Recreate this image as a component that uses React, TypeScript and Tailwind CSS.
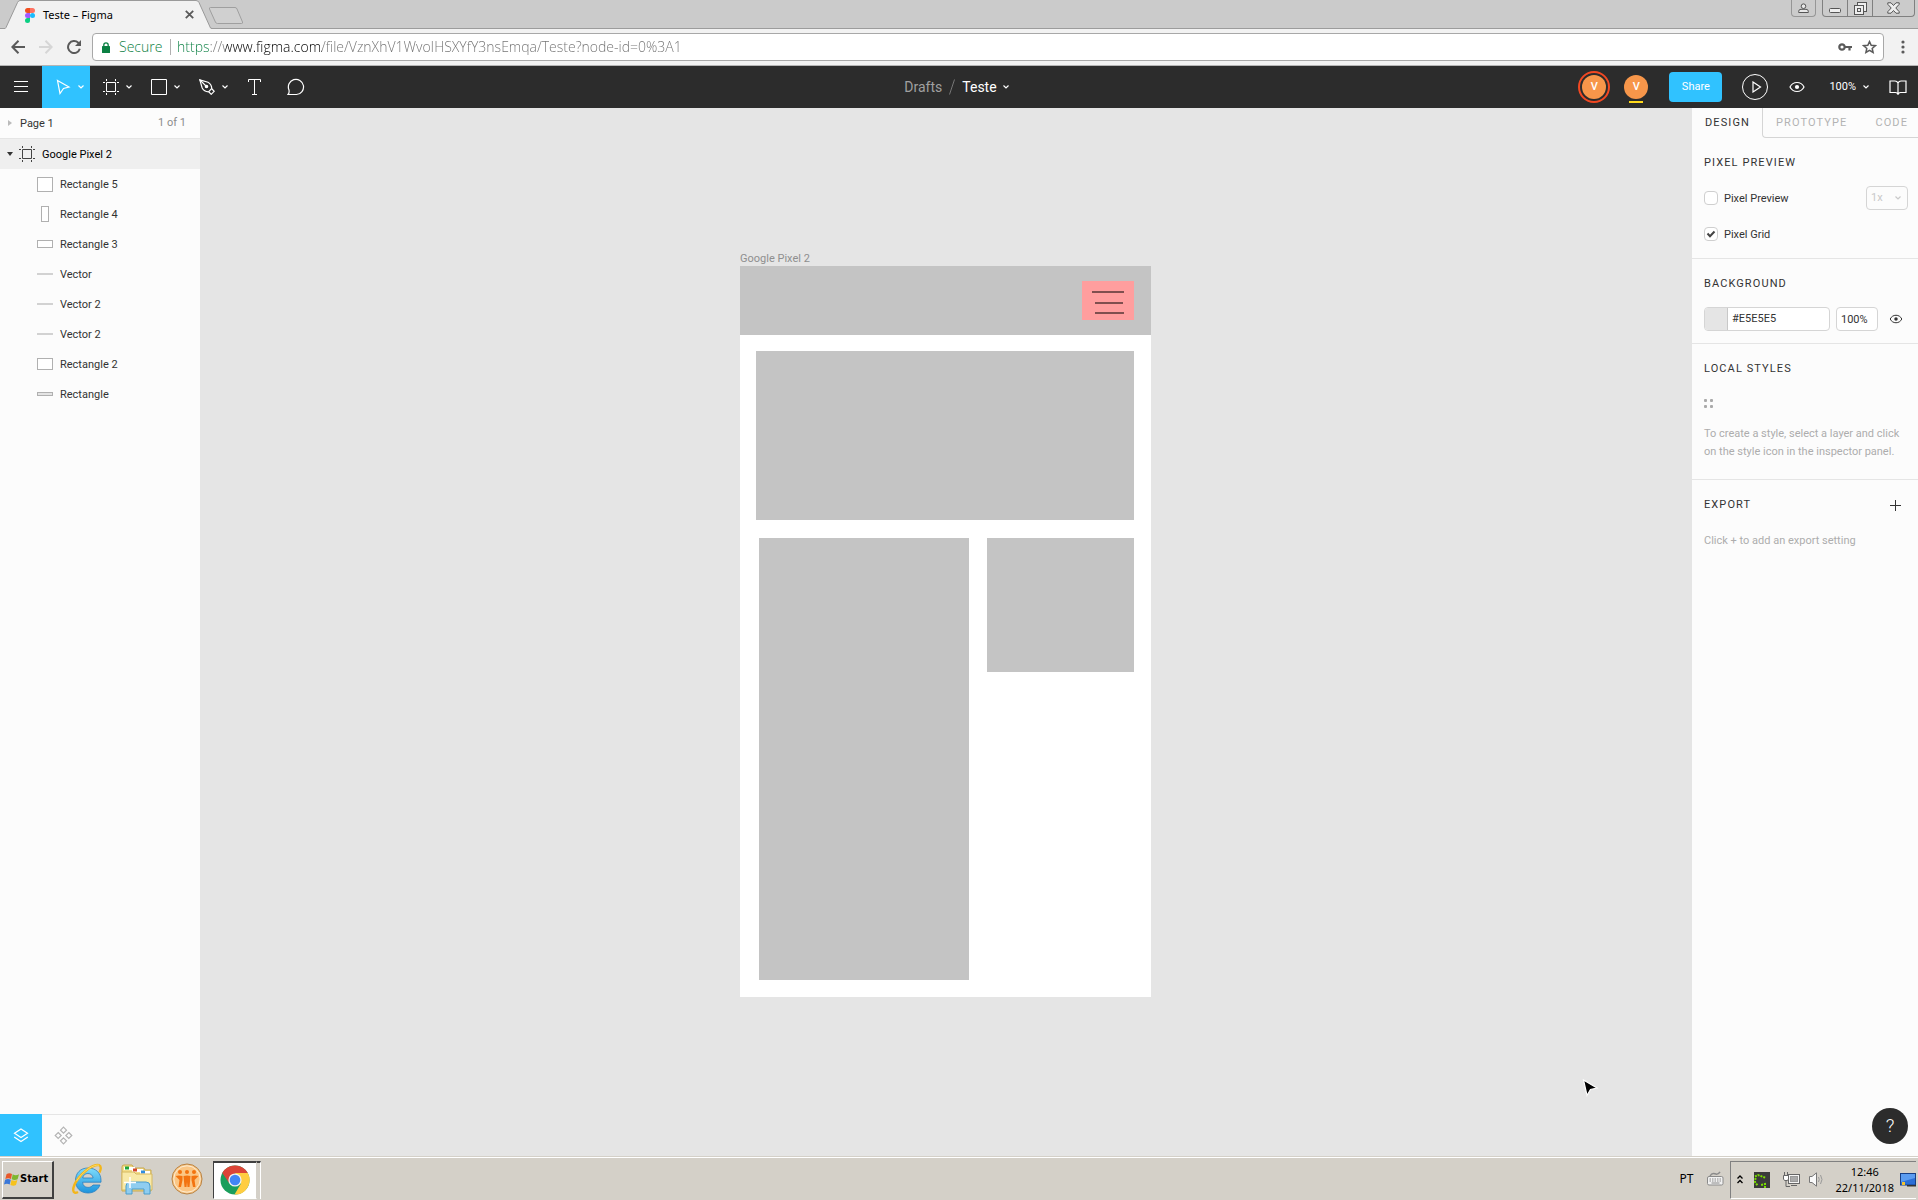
import React from "react";

type Kids = { children?: React.ReactNode };

const layers: { name: string; box: [number, number] | null; fill?: string }[] = [
  { name: "Rectangle 5", box: [15, 14] },
  { name: "Rectangle 4", box: [7, 15] },
  { name: "Rectangle 3", box: [15, 7] },
  { name: "Vector", box: null },
  { name: "Vector 2", box: null },
  { name: "Vector 2", box: null },
  { name: "Rectangle 2", box: [15, 11] },
  { name: "Rectangle", box: [15, 3], fill: "#e4e4e4" },
];

function Chevron({ className = "" }: { className?: string }) {
  return (
    <svg width="8" height="6" viewBox="0 0 8 6" className={className} fill="none" stroke="currentColor" strokeWidth="1.2">
      <path d="M1.500 1.500 4 4 6.500 1.500" />
    </svg>
  );
}

function FrameIcon() {
  return (
    <svg width="16" height="16" viewBox="0 0 16 16" fill="none" stroke="currentColor">
      <path d="M3.5 3.5h9v9h-9zM3.5 0v2M12.500 0v2M3.500 14v2M12.500 14v2M0 3.500h2M0 12.500h2M14 3.500h2M14 12.500h2" />
    </svg>
  );
}

function EyeIcon({ small = false }: { small?: boolean }) {
  return (
    <svg width={small ? 14 : 16} height={small ? 10 : 12} viewBox="0 0 16 12" fill="none" stroke="currentColor" strokeWidth="1.2">
      <path d="M1 6C2.500 3 5 1.500 8 1.500S13.500 3 15 6c-1.500 3-4 4.500-7 4.500S2.500 9 1 6z" />
      <circle cx="8" cy="6" r="2.100" fill="currentColor" stroke="none" />
    </svg>
  );
}

function BrowserTabs() {
  return (
    <header className="relative flex h-[29px] shrink-0 items-start border-b border-[#9c9c9c] bg-[#cbcbcb]">
      <div className="relative ml-[5px] flex h-[29px] w-[207px] items-center pl-5 pr-[18px]">
        <svg className="absolute inset-0" width="207" height="29" viewBox="0 0 207 29">
          <path d="M0 29 1 27.500 12.500 2.500Q13.500 .5 15 .5H191Q193 .5 194 2.500L205.500 28 207 29z" fill="#f2f2f2" />
          <path d="M0 28.500 1 27.500 12.500 2.500Q13.500 .5 15 .5H191Q193 .5 194 2.500L205.500 28 207 28.500" fill="none" stroke="#9a9a9a" />
        </svg>
        <svg className="relative mt-0.5" width="10" height="15" viewBox="0 0 10 15">
          <path d="M5 0H2.500a2.500 2.500 0 0 0 0 5H5z" fill="#f24e1e" />
          <path d="M5 0h2.500a2.500 2.500 0 0 1 0 5H5z" fill="#ff7262" />
          <path d="M5 5H2.500a2.500 2.500 0 0 0 0 5H5z" fill="#a259ff" />
          <circle cx="7.500" cy="7.500" r="2.500" fill="#1abcfe" />
          <path d="M5 10H2.500A2.500 2.500 0 1 0 5 12.500z" fill="#0acf83" />
        </svg>
        <span className="relative ml-2 flex-1 font-['Noto_Sans'] text-[11px] leading-4 text-black">Teste – Figma</span>
        <button aria-label="Close tab" className="relative text-[#5a5a5a]">
          <svg width="9" height="9" viewBox="0 0 9 9" stroke="currentColor" strokeWidth="1.800">
            <path d="M.8.800 8.200 8.200M8.200.800.800 8.200" />
          </svg>
        </button>
      </div>
      <button aria-label="New tab" className="-ml-1 mt-1.5">
        <svg width="36" height="19" viewBox="0 0 36 19">
          <path d="M2.500 1.500H27Q28.500 1.500 29 3L34.500 16Q35 17.500 33.500 17.500H9.500Q8 17.500 7.400 16L1.500 3Q1 1.500 2.500 1.500z" fill="#d0d0d0" stroke="#9f9f9f" />
        </svg>
      </button>
      <div className="ml-auto mr-[3px] flex gap-1.5">
        <button aria-label="User" className="flex h-[17px] w-[25px] items-center justify-center rounded-b border border-t-0 border-[#969696]">
          <svg width="11" height="11" viewBox="0 0 11 11" fill="#e8e8e8" stroke="#555">
            <circle cx="5.500" cy="3.200" r="2.300" />
            <path d="M.7 9.500V8.300Q.7 6.300 3 6.300H8q2.300 0 2.300 2V9.500z" />
          </svg>
        </button>
        <div className="flex h-[17px] rounded-b border border-t-0 border-[#808080] text-[#555]">
          <button aria-label="Minimize" className="flex w-[25px] items-center justify-center border-r border-[#808080]">
            <svg width="12" height="12" viewBox="0 0 12 12" fill="#eee" stroke="currentColor">
              <rect x=".5" y="6.500" width="11" height="4" rx="1" />
            </svg>
          </button>
          <button aria-label="Restore" className="flex w-[25px] items-center justify-center border-r border-[#808080]">
            <svg width="13" height="13" viewBox="0 0 13 13" fill="#eee" stroke="currentColor">
              <rect x="3.500" y=".5" width="9" height="9" />
              <rect x=".5" y="3.500" width="9" height="9" />
              <rect x="3.500" y="6.500" width="3" height="3" />
            </svg>
          </button>
          <button aria-label="Close" className="flex w-[41px] items-center justify-center">
            <svg width="13" height="12" viewBox="0 0 13 12" fill="#eee" stroke="currentColor">
              <path d="M.8.800H4L6.500 3.500 9 .8h3.200v1.500L8.800 6l3.400 3.700v1.500H9L6.500 8.500 4 11.200H.8V9.700L4.200 6 .8 2.300z" />
            </svg>
          </button>
        </div>
      </div>
    </header>
  );
}

function AddressBar() {
  return (
    <div className="flex h-[37px] shrink-0 items-center border-b border-[#b5b5b5] bg-[#f2f2f2] pl-[11px] pr-2 text-[#5a5a5a]">
      <button aria-label="Back">
        <svg width="14" height="14" viewBox="0 0 14 14" fill="none" stroke="currentColor" strokeWidth="2">
          <path d="M14 7H1.500M7.500.800 1.400 7l6.100 6.200" />
        </svg>
      </button>
      <button aria-label="Forward" className="ml-3.5 text-[#d6d6d6]">
        <svg width="14" height="14" viewBox="0 0 14 14" fill="none" stroke="currentColor" strokeWidth="2">
          <path d="M0 7h12.500M6.500.800 12.600 7l-6.100 6.200" />
        </svg>
      </button>
      <button aria-label="Reload" className="ml-3.5">
        <svg width="14" height="14" viewBox="0 0 14 14" fill="none" stroke="currentColor" strokeWidth="2">
          <path d="M12.800 8.800A6 6 0 1 1 11.300 2.800L12 3.500" />
          <path d="M14 0v6H8z" fill="currentColor" stroke="none" />
        </svg>
      </button>
      <div className="ml-[11px] flex h-7 flex-1 items-center rounded-sm border border-[#a8a8a8] bg-white pl-[9px] pr-1.5 font-['Open_Sans'] text-[14px] font-light leading-6">
        <svg width="8" height="11" viewBox="0 0 8 11" className="shrink-0">
          <path d="M1.800 5V3a2.200 2.200 0 0 1 4.400 0v2" fill="none" stroke="#0b8043" strokeWidth="1.300" />
          <rect y="4" width="8" height="7" rx=".5" fill="#0b8043" />
        </svg>
        <span className="ml-[9px] w-[42px] text-[#0b8043]">Secure</span>
        <span className="ml-[9px] mr-1.5 h-4 w-px bg-[#b0b0b0]" />
        <input
          aria-label="Address"
          defaultValue="https://www.figma.com/file/VznXhV1WvoIHSXYfY3nsEmqa/Teste?node-id=0%3A1"
          className="h-6 min-w-0 flex-1 bg-[linear-gradient(90deg,#0b8043_33px,#707070_33px,#707070_48px,#000_48px,#000_145px,#707070_145px)] bg-clip-text text-transparent outline-none"
        />
        <button aria-label="Saved password">
          <svg width="14" height="8" viewBox="0 0 14 8" fill="none" stroke="currentColor" strokeWidth="2.200">
            <circle cx="4" cy="4" r="2.700" />
            <path d="M6.500 4H14M11.500 4v3.500" />
          </svg>
        </button>
        <button aria-label="Bookmark" className="ml-2.5">
          <svg width="15" height="14" viewBox="0 0 15 14" fill="none" stroke="currentColor" strokeWidth="1.500">
            <path d="M7.500 1.600 9.200 5.300l4.100.4-3.100 2.700.9 4.100-3.600-2.100-3.600 2.100.9-4.100L1.700 5.700l4.100-.4z" />
          </svg>
        </button>
      </div>
      <button aria-label="Menu" className="ml-3.5 w-3">
        <svg width="12" height="14" viewBox="0 0 12 14" fill="currentColor">
          <circle cx="5" cy="2" r="1.600" />
          <circle cx="5" cy="7" r="1.600" />
          <circle cx="5" cy="12" r="1.600" />
        </svg>
      </button>
    </div>
  );
}

function Tool({ label, active, children }: Kids & { label: string; active?: boolean }) {
  return (
    <button
      aria-label={label}
      className={
        active
          ? "flex h-full w-12 items-center justify-between bg-[#30c2ff] pl-3.5 pr-[5px]"
          : "flex h-full w-12 items-center justify-between pl-[13px] pr-[5px]"
      }
    >
      {children}
      <Chevron />
    </button>
  );
}

function AppBar() {
  return (
    <div className="grid h-[42px] shrink-0 grid-cols-[1fr_auto_1fr] items-center bg-[#2c2c2c] font-['Roboto'] text-white">
      <div className="flex h-full items-center">
        <button aria-label="Main menu" className="flex w-[42px] justify-center">
          <svg width="14" height="12" viewBox="0 0 14 12" stroke="currentColor">
            <path d="M0 .5h14M0 5.500h14M0 10.500h14" />
          </svg>
        </button>
        <Tool label="Move" active>
          <svg width="15" height="16" viewBox="0 0 15 16" fill="none" stroke="currentColor" strokeWidth="1.200">
            <path d="M1.500 1.500 13 8 7.500 9.500 4 14.500z" />
          </svg>
        </Tool>
        <Tool label="Frame">
          <FrameIcon />
        </Tool>
        <Tool label="Rectangle">
          <svg width="16" height="16" viewBox="0 0 16 16" fill="none" stroke="currentColor">
            <path d="M.5.500h15v15H.5z" />
          </svg>
        </Tool>
        <Tool label="Pen">
          <svg width="16" height="16" viewBox="0 0 16 16" fill="none" stroke="currentColor" strokeWidth="1.200">
            <path d="M.8.800 9 3.200Q12.500 5 12.800 9.500L9.500 12.800Q5 12.500 3.200 9z" />
            <path d="M.8.800 7 7M13 10l2.200 2.300-3 3L10 13" />
            <circle cx="7.500" cy="7.500" r="1.200" fill="currentColor" />
          </svg>
        </Tool>
        <button aria-label="Text" className="flex w-[41px] justify-center">
          <svg width="13" height="16" viewBox="0 0 13 16" fill="none" stroke="currentColor">
            <path d="M.5 3V.5h12V3M6.500.500v15M4 15.500h5" />
          </svg>
        </button>
        <button aria-label="Comment" className="flex w-[42px] justify-center">
          <svg width="18" height="18" viewBox="0 0 18 18" fill="none" stroke="currentColor" strokeWidth="1.200">
            <path d="M1 16.500Q2.500 15 2 12A7.600 7.600 0 1 1 9.500 16.500z" />
          </svg>
        </button>
      </div>
      <div className="flex items-center pr-1 text-[14px] leading-5">
        <a href="#drafts" className="text-[#a0a0a0]">Drafts</a>
        <svg width="6" height="16" viewBox="0 0 6 16" className="mx-[7px]" stroke="#777">
          <path d="M5.500.500.500 15.500" />
        </svg>
        <button className="flex items-center gap-[5px]">
          Teste <Chevron />
        </button>
      </div>
      <div className="flex h-full items-center justify-end pr-[11px] text-[11px]">
        <div className="flex size-8 items-center justify-center rounded-full border-2 border-[#f24822]">
          <span className="flex size-6 items-center justify-center rounded-full bg-[#f7964a] font-medium">V</span>
        </div>
        <div className="relative ml-3.5 flex size-6 items-center justify-center rounded-full bg-[#f7964a] font-medium">
          V
          <span className="absolute -bottom-1 left-[5px] h-0.5 w-3.5 bg-[#ffd91a]" />
        </div>
        <button className="ml-[21px] h-[30px] w-[53px] rounded-sm bg-[#30c2ff] text-[11px]">Share</button>
        <button aria-label="Present" className="ml-5 flex size-[26px] items-center justify-center rounded-full border border-white pl-1">
          <svg width="10" height="12" viewBox="0 0 10 12" fill="none" stroke="currentColor" strokeWidth="1.200">
            <path d="M1 1v10l7.500-5z" />
          </svg>
        </button>
        <button aria-label="View" className="ml-[21px]">
          <EyeIcon />
        </button>
        <button className="ml-6 flex items-center gap-1.5">
          100% <Chevron />
        </button>
        <button aria-label="Library" className="ml-[19px]">
          <svg width="18" height="15" viewBox="0 0 18 15" fill="none" stroke="currentColor" strokeWidth="1.200">
            <path d="M9 3Q8 1 6 1H1v11.500H6.500Q8.500 12.500 9 14.500 9.500 12.500 11.500 12.500H17V1H12Q10 1 9 3zV14" />
          </svg>
        </button>
      </div>
    </div>
  );
}

function LayersPanel() {
  return (
    <aside className="flex w-[200px] shrink-0 flex-col bg-[#fcfcfc] text-[#333]">
      <div className="flex h-[31px] items-center border-b border-[#e5e5e5] pl-2 pr-3.5">
        <svg width="4" height="6" viewBox="0 0 4 6" fill="#bbb">
          <path d="M0 0 4 3 0 6z" />
        </svg>
        <button className="ml-2 flex-1 pt-0.5 text-left">Page 1</button>
        <span className="text-[#8c8c8c]">1 of 1</span>
      </div>
      <div className="flex h-[30px] items-center bg-[#efefef] pl-[7px] text-black">
        <svg width="6" height="4" viewBox="0 0 6 4" fill="#333">
          <path d="M0 0h6L3 4z" />
        </svg>
        <span className="ml-1.5 text-[#444]">
          <FrameIcon />
        </span>
        <button className="ml-[7px] pt-0.5">Google Pixel 2</button>
      </div>
      <ul>
        {layers.map((l, i) => (
          <li key={i} className="flex h-[30px] items-center pl-[37px]">
            <svg width="16" height="16" viewBox="0 0 16 16">
              {l.box ? (
                <rect
                  x={l.box[0] === 7 ? 4.5 : 0.5}
                  y={Math.floor((16 - l.box[1]) / 2) + 0.5}
                  width={l.box[0]}
                  height={l.box[1]}
                  fill={l.fill ?? "#fff"}
                  stroke="#b0b0b0"
                />
              ) : (
                <rect y="7" width="16" height="2" fill="#d2d2d2" />
              )}
            </svg>
            <button className="ml-[7px] pt-0.5">{l.name}</button>
          </li>
        ))}
      </ul>
      <div className="mt-auto flex h-[42px] items-stretch">
        <button aria-label="Layers" className="flex w-[42px] items-center justify-center bg-[#30c2ff] text-white">
          <svg width="16" height="15" viewBox="0 0 16 15" fill="none" stroke="currentColor" strokeWidth="1.200">
            <path d="M8 1l6.500 4.300L8 9.600 1.500 5.300zM1.200 9 8 13.600 14.800 9" />
          </svg>
        </button>
        <div className="flex flex-1 items-center border-t border-[#e5e5e5] pl-3">
          <button aria-label="Components" className="text-[#b3b3b3]">
            <svg width="19" height="19" viewBox="0 0 19 19" fill="none" stroke="currentColor" strokeWidth="1.200">
              <path d="M9.500 1.200l3 3-3 3-3-3zM9.500 11.800l3 3-3 3-3-3zM4.200 6.500l3 3-3 3-3-3zM14.800 6.500l3 3-3 3-3-3z" />
            </svg>
          </button>
        </div>
      </div>
    </aside>
  );
}

function Canvas() {
  return (
    <main className="relative min-w-0 flex-1 overflow-hidden bg-[#e5e5e5]">
      <span className="absolute left-[540px] top-[143px] leading-4 text-[#8f8f8f]">Google Pixel 2</span>
      <div className="absolute left-[540px] top-[158px] h-[731px] w-[411px] bg-white">
        <div className="absolute left-0 top-0 h-[69px] w-[411px] bg-[#c4c4c4]" />
        <div className="absolute left-[342px] top-[15px] h-[39px] w-[52px] bg-[#ff9e9e]" />
        <div className="absolute left-[352px] top-[25px] h-0.5 w-8 bg-[#804f4f]" />
        <div className="absolute left-[355px] top-[36px] h-0.5 w-7 bg-[#804f4f]" />
        <div className="absolute left-[355px] top-[46px] h-0.5 w-[29px] bg-[#804f4f]" />
        <div className="absolute left-4 top-[85px] h-[169px] w-[378px] bg-[#c4c4c4]" />
        <div className="absolute left-[19px] top-[272px] h-[442px] w-[210px] bg-[#c4c4c4]" />
        <div className="absolute left-[247px] top-[272px] h-[134px] w-[147px] bg-[#c4c4c4]" />
      </div>
      <svg className="absolute left-[1382px] top-[971px]" width="18" height="19" viewBox="0 0 18 19">
        <path d="M1.500 1 15 9 8.500 10.500 5 16.500z" fill="#000" stroke="#fff" strokeWidth="1.200" />
      </svg>
    </main>
  );
}

function SectionTitle({ children }: Kids) {
  return <h2 className="text-[11px] leading-4 tracking-widest">{children}</h2>;
}

function Check({ label, checked }: { label: string; checked: boolean }) {
  return (
    <label className="flex items-center gap-1.5">
      <span className="relative flex size-3.5">
        <input type="checkbox" defaultChecked={checked} className="peer size-3.5 appearance-none rounded-sm border border-[#cfcfcf] bg-white" />
        <svg className="pointer-events-none absolute inset-0 hidden peer-checked:block" width="14" height="14" viewBox="0 0 14 14" fill="none" stroke="#444" strokeWidth="2">
          <path d="M3.500 6.500 6 9.200 10.500 4.500" />
        </svg>
      </span>
      <span className="pt-0.5">{label}</span>
    </label>
  );
}

function Inspector() {
  return (
    <aside className="relative flex w-[226px] shrink-0 flex-col bg-[#fcfcfc] text-[#333]">
      <div role="tablist" className="flex h-[30px] text-[11px] tracking-widest">
        <button role="tab" aria-selected="true" className="w-[70px] pl-px">DESIGN</button>
        <div className="flex flex-1 items-center justify-between rounded-bl-sm border-b border-l border-[#d5d5d5] pl-[13px] pr-2.5 pt-px text-[#b3b3b3]">
          <button role="tab" aria-selected="false" className="tracking-widest">PROTOTYPE</button>
          <button role="tab" aria-selected="false" className="tracking-widest">CODE</button>
        </div>
      </div>
      <section className="border-b border-[#e5e5e5] px-3 pb-3 pt-[17px]">
        <SectionTitle>PIXEL PREVIEW</SectionTitle>
        <div className="-mr-0.5 mt-[15px] flex h-6 items-center justify-between">
          <Check label="Pixel Preview" checked={false} />
          <div className="relative text-[#c9c9c9]">
            <select aria-label="Pixel density" disabled defaultValue="1x" className="h-6 w-[42px] appearance-none rounded-sm border border-[#d5d5d5] bg-[#fcfcfc] pl-1">
              <option>1x</option>
            </select>
            <Chevron className="pointer-events-none absolute right-1.5 top-[9px]" />
          </div>
        </div>
        <div className="mt-3 flex h-6 items-center">
          <Check label="Pixel Grid" checked />
        </div>
      </section>
      <section className="border-b border-[#e5e5e5] px-3 pb-3 pt-[17px]">
        <SectionTitle>BACKGROUND</SectionTitle>
        <div className="mt-[15px] flex items-center">
          <div className="flex h-6 w-[126px] overflow-hidden rounded-sm border border-[#d5d5d5] bg-white">
            <button aria-label="Background colour" className="w-[23px] border-r border-[#c8c8c8] bg-[#e5e5e5]" />
            <input aria-label="Hex" defaultValue="#E5E5E5" className="min-w-0 flex-1 pl-1 outline-none" />
          </div>
          <input aria-label="Opacity" defaultValue="100%" className="ml-1.5 h-6 w-[42px] rounded-sm border border-[#d5d5d5] bg-white pl-1 outline-none" />
          <button aria-label="Toggle background" className="ml-[11px]">
            <EyeIcon small />
          </button>
        </div>
      </section>
      <section className="border-b border-[#e5e5e5] pb-[18px] pl-3 pt-[17px]">
        <SectionTitle>LOCAL STYLES</SectionTitle>
        <svg width="10" height="10" viewBox="0 0 10 10" fill="#aaa" className="mt-[22px]">
          <rect width="3" height="3" rx="1" />
          <rect x="6" width="3" height="3" rx="1" />
          <rect y="6" width="3" height="3" rx="1" />
          <rect x="6" y="6" width="3" height="3" rx="1" />
        </svg>
        <p className="mt-4 leading-[18px] text-[#adadad]">
          To create a style, select a layer and click
          <br />
          on the style icon in the inspector panel.
        </p>
      </section>
      <section className="px-3 pt-[17px]">
        <div className="flex items-center justify-between pr-[5px]">
          <SectionTitle>EXPORT</SectionTitle>
          <button aria-label="Add export">
            <svg width="11" height="11" viewBox="0 0 11 11" stroke="#333">
              <path d="M5.500 0v11M0 5.500h11" />
            </svg>
          </button>
        </div>
        <p className="mt-5 leading-4 text-[#adadad]">Click + to add an export setting</p>
      </section>
      <button aria-label="Help" className="absolute bottom-3 right-2.5 flex size-9 items-center justify-center rounded-full bg-[#2c2c2c] text-[19px] font-light text-white">
        ?
      </button>
    </aside>
  );
}

function Taskbar() {
  return (
    <footer className="flex h-11 shrink-0 items-center border-t border-[#d4d0c8] bg-[#d4d0c8] px-0.5 font-['Noto_Sans'] text-black shadow-[inset_0_1px_0_#fff]">
      <button className="mt-0.5 flex h-[38px] w-[52px] items-center border-b-2 border-l border-r-2 border-t border-b-[#404040] border-l-white border-r-[#404040] border-t-white pl-px font-['DejaVu_Sans_Condensed'] text-[11px] font-bold">
        <svg width="16" height="15" viewBox="0 0 16 15" className="shrink-0">
          <path d="M2.500 2.300Q5 .5 8 2L7 7Q4.500 5.500 1.300 7z" fill="#e8592b" />
          <path d="M8.700 2.300Q11.500 4 15 2.300L13.600 7.300Q10.500 8.500 7.700 7.300z" fill="#7db72f" />
          <path d="M1.100 7.700Q4 6.300 6.800 7.700L5.700 12.500Q3 11 0 12.500z" fill="#3b78d8" />
          <path d="M7.500 8Q10.500 9.500 13.400 8L12 13Q9.500 14.500 6.400 13z" fill="#f6c21c" />
        </svg>
        Start
      </button>
      <button aria-label="Internet Explorer" className="ml-[17px]">
        <svg width="32" height="32" viewBox="0 0 32 32">
          <defs>
            <linearGradient id="ie" x1="0" y1="0" x2="0" y2="1">
              <stop offset="0" stopColor="#7fdcfb" />
              <stop offset="1" stopColor="#1c93dc" />
            </linearGradient>
          </defs>
          <path
            d="M17 5C9.500 5 4.500 10 4.500 17.500S9.500 30 17 30c5.500 0 10-3 12-8h-7c-1.200 1.600-2.800 2.400-5 2.400-3.200 0-5.200-1.900-5.400-5.200H30V17.500C30 10 25 5 17 5zM11.700 15c.4-2.800 2.400-4.500 5.200-4.500s4.800 1.700 5.200 4.500z"
            fill="url(#ie)"
            stroke="#2a7fc0"
            strokeWidth=".8"
          />
          <path d="M7 29C1.500 32 .5 26 5.500 18 12 8 23 .8 28 2.200 30.500 3 30 6.500 28.500 9.500" fill="none" stroke="#f3b61a" strokeWidth="2.400" />
          <path d="M5.500 18C12 8 23 .8 28 2.200" fill="none" stroke="#fde27a" strokeWidth=".8" />
        </svg>
      </button>
      <button aria-label="Explorer" className="ml-[17px]">
        <svg width="34" height="32" viewBox="0 0 34 32">
          <path d="M2 4q0-2 2-2h8l2 3h10l1 2h6v21H2z" fill="#f3dd8a" stroke="#c9a94e" />
          <path d="M4 4h11v3H4zM12 6h11v3H12zM20 8h10v3H20z" fill="#fff" />
          <path d="M5 3.500h4v3H5z" fill="#1ea43a" />
          <path d="M13 5.500h4v3h-4z" fill="#d4472c" />
          <path d="M21 7.500h4v3h-4z" fill="#2f8de0" />
          <path d="M2 9h12l2 2h16v16H2z" fill="#f8e9a8" stroke="#d6b960" />
          <path d="M6 31V23q0-4 4-4h16q4 0 4 4v8h-6v-5H12v5z" fill="#8fcdf0" stroke="#4b9dcc" />
          <path d="M10 14v11M4 19.500h12" stroke="#fff" strokeWidth="1.500" />
        </svg>
      </button>
      <button aria-label="People" className="ml-[17px]">
        <svg width="32" height="32" viewBox="0 0 32 32">
          <circle cx="16" cy="16" r="15" fill="#f8c98a" stroke="#b98243" />
          <circle cx="16" cy="16" r="13.200" fill="#fbc684" stroke="#fdebd0" />
          <g fill="#f3730f">
            <circle cx="9" cy="9" r="2" />
            <circle cx="16" cy="9" r="2" />
            <circle cx="23" cy="9" r="2" />
            <path d="M4.500 13q3.500-1 7 0v4l-1.500 7H7.500l1-7zM12.500 13q3.500-1 7 0l-1 11h-2L16 19l-.5 5h-2zM27.500 13q-3.500-1-7 0v4l1.500 7h2.500l-1-7z" />
          </g>
        </svg>
      </button>
      <button aria-label="Chrome" className="ml-2.5 mt-0.5 flex h-[38px] w-11 items-center justify-center border-b border-l border-r border-t-2 border-b-white border-l-[#404040] border-r-[#d4d0c8] border-t-[#404040] bg-white">
        <svg width="30" height="30" viewBox="0 0 30 30">
          <circle cx="15" cy="15" r="14.500" fill="#1a9e5c" />
          <path d="M2.300 8A14.500 14.500 0 0 1 27.700 8H15L9.500 18.500z" fill="#dc4437" />
          <path d="M27.800 8A14.500 14.500 0 0 1 14.500 29.500L21 18.500 15 8z" fill="#ffcd41" />
          <circle cx="15" cy="15" r="6.600" fill="#f1f1f1" />
          <circle cx="15" cy="15" r="5.300" fill="#4285f4" />
        </svg>
      </button>
      <span className="mt-0.5 h-[38px] w-1 border-r border-t-2 border-r-white border-t-[#404040]" />
      <span className="ml-auto text-[12px] leading-4">PT</span>
      <svg width="17" height="15" viewBox="0 0 17 15" className="ml-3.5 mr-1.5" fill="none" stroke="#8a8a8a">
        <path d="M3 5Q5 1.500 8 2.800T13 .8" strokeWidth="1.500" />
        <rect x=".5" y="5.500" width="15.500" height="8.500" rx="1.500" fill="#f1f1f1" />
        <path d="M2.500 8h12M2.500 10h12" strokeDasharray="1.500 1" />
        <path d="M4.500 12h8" />
      </svg>
      <div className="mt-0.5 flex h-[38px] items-center border-b border-l border-t border-b-white border-l-[#808080] border-t-[#808080] pl-1.5">
        <button aria-label="Show hidden icons">
          <svg width="6" height="9" viewBox="0 0 6 9" fill="none" stroke="#000" strokeWidth="1.300">
            <path d="M.5 3.500 3 1 5.500 3.500M.5 8 3 5.500 5.500 8" />
          </svg>
        </button>
        <svg width="16" height="16" viewBox="0 0 16 16" className="ml-[11px]">
          <rect width="16" height="16" fill="#3a3a3a" />
          <path d="M1 4.500 4 3l8 3M1.500 6 1 10l3 4M11 16v-4l-4 1" fill="none" stroke="#7be000" strokeWidth="2" strokeDasharray="2 1" />
        </svg>
        <svg width="17" height="16" viewBox="0 0 17 16" className="ml-[13px]" stroke="#666">
          <rect x="5.500" y="2.500" width="11" height="9" fill="#f5f5f5" />
          <rect x="7.500" y="4.500" width="7" height="5" fill="#aaa" stroke="#999" />
          <path d="M8 13.500h6M3 8v6.500h4" fill="none" />
          <path d="M.5 3.500h5V7l-1 1.500h-3L.5 7zM1.500 0v3M4.500 0v3" fill="#fff" />
        </svg>
        <svg width="14" height="15" viewBox="0 0 14 15" className="ml-[9px]" fill="#fafafa" stroke="#777">
          <path d="M.5 4.500H3L7.500.800V14.200L3 10.500H.5z" />
          <path d="M9.500 5q1.500 2.500 0 5M11.500 3q3 4.500 0 9" fill="none" stroke="#999" />
        </svg>
        <div className="ml-3 text-center text-[11px] leading-4">
          <div>12:46</div>
          <div>22/11/2018</div>
        </div>
        <svg width="16" height="14" viewBox="0 0 16 14" className="ml-1.5">
          <rect x=".5" y=".5" width="15" height="11.500" fill="#2c6fd6" stroke="#173f86" />
          <path d="M1 1h14v4L1 9z" fill="#5b9cf0" />
          <rect x="2" y="9" width="3" height="3" fill="#f2c230" />
          <rect x="7" y="12" width="9" height="1.500" fill="#333" />
        </svg>
      </div>
    </footer>
  );
}

export default function App() {
  return (
    <div className="flex h-screen flex-col overflow-hidden">
      <BrowserTabs />
      <AddressBar />
      <AppBar />
      <div className="flex min-h-0 flex-1 font-['Roboto'] text-[11px]">
        <LayersPanel />
        <Canvas />
        <Inspector />
      </div>
      <Taskbar />
    </div>
  );
}
